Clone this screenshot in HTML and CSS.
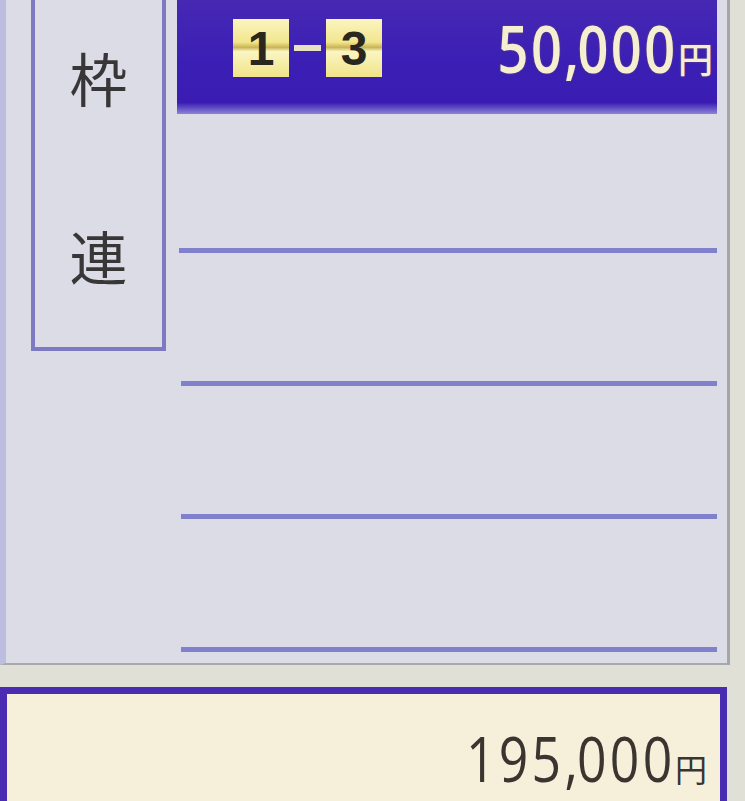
FILE: index.html
```html
<!DOCTYPE html>
<html lang="ja">
<head>
<meta charset="utf-8">
<title>枠連</title>
<link rel="stylesheet" href="styles.css">
</head>
<body>
<div class="panel">
  <div class="label-col">
    <div class="label-box"><span class="kanji">枠</span><span class="kanji">連</span></div>
  </div>
  <div class="rows">
    <div class="header">
      <div class="combo">
        <span class="badge">1</span><span class="dash"></span><span class="badge">3</span>
      </div>
      <div class="bet"><span class="num">50<span class="comma">,</span>000</span><span class="yen">円</span></div>
    </div>
    <div class="row first"></div>
    <div class="row"></div>
    <div class="row"></div>
    <div class="row"></div>
  </div>
</div>
<div class="total">
  <span class="num">195<span class="comma">,</span>000</span><span class="yen">円</span>
</div>
</body>
</html>
```
FILE: styles.css
```css
html, body {
  margin: 0;
  padding: 0;
}
body {
  width: 745px;
  height: 801px;
  overflow: hidden;
  background: #e0e0d6;
  font-family: "Open Sans", "Noto Sans CJK JP", sans-serif;
}
.panel {
  display: flex;
  width: 730px;
  height: 665px;
  box-sizing: border-box;
  background: #dcdce7;
  border-left: 6px solid #bdbde0;
  border-right: 3px solid #a6a6aa;
  border-bottom: 2px solid #a8a8ac;
}
.label-col {
  padding-left: 25px;
  width: 146px;
  flex: none;
}
.label-box {
  width: 135px;
  height: 351px;
  box-sizing: border-box;
  border: 4px solid #7e7ac2;
  border-top: none;
  display: flex;
  flex-direction: column;
  align-items: center;
  padding-top: 48px;
  gap: 120px;
}
.kanji {
  font-family: "Noto Sans CJK JP", sans-serif;
  font-size: 58px;
  line-height: 58px;
  color: #383636;
}
.rows {
  width: 540px;
  flex: none;
  display: flex;
  flex-direction: column;
}
.header {
  height: 114px;
  box-sizing: border-box;
  background: linear-gradient(180deg, #4728b4 0%, #3b1fb4 55%, #3a1cb2 90%, #8c84d6 100%);
  display: flex;
  align-items: center;
  justify-content: space-between;
  padding: 0 4px 18px 56px;
}
.combo {
  display: flex;
  align-items: center;
  gap: 5px;
}
.badge {
  width: 56px;
  height: 58px;
  display: flex;
  align-items: center;
  justify-content: center;
  font-family: "Liberation Sans", sans-serif;
  font-weight: bold;
  font-size: 48px;
  color: #2a271f;
  background: linear-gradient(180deg, #fbf5c0 0%, #f2e68e 40%, #c9b455 49%, #fbf5c4 56%, #f1e487 100%);
}
.dash {
  width: 27px;
  height: 6px;
  background: #e9e1c4;
}
.bet {
  display: flex;
  align-items: baseline;
  color: #f5eed0;
  text-shadow: 0 0 2px #6a5a60;
}
.num {
  display: inline-block;
  transform: scaleX(0.82);
  transform-origin: right center;
}
.bet .num {
  font-size: 66px;
  font-weight: 600;
  letter-spacing: 3px;
  line-height: 1;
}
.comma {
  margin-right: -5px;
}
.bet .yen {
  font-family: "Noto Sans CJK JP", sans-serif;
  font-size: 35px;
  font-weight: 500;
  margin-left: 0;
}
.row {
  height: 133px;
  box-sizing: border-box;
  border-bottom: 5px solid #8080cc;
  margin-left: 4px;
}
.row.first {
  height: 139px;
  margin-left: 2px;
}
.total {
  margin-top: 22px;
  width: 727px;
  height: 114px;
  box-sizing: border-box;
  border: 7px solid #4a2cb2;
  border-bottom: none;
  background: #f6efd9;
  display: flex;
  justify-content: flex-end;
  align-items: baseline;
  padding: 32px 13px 0 0;
  color: #3a3530;
}
.total .num {
  font-size: 63px;
  letter-spacing: 4px;
  line-height: 1;
}
.total .yen {
  font-family: "Noto Sans CJK JP", sans-serif;
  font-size: 32px;
  margin-left: 0;
}
```
